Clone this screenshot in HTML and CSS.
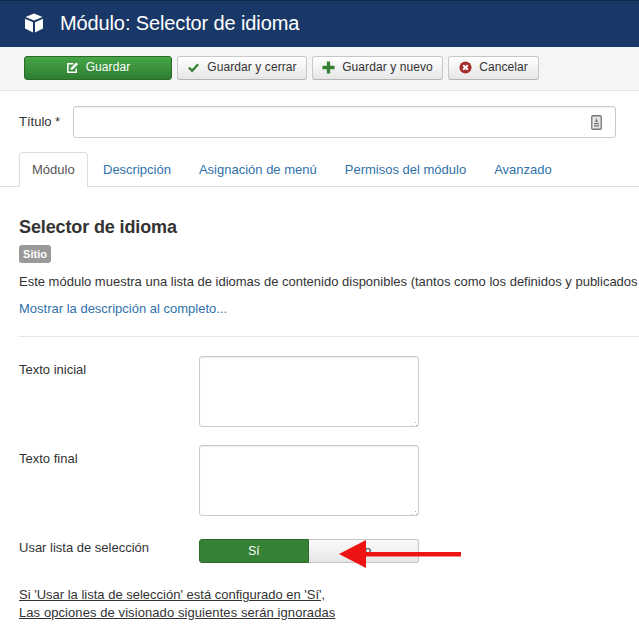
FILE: index.html
```html
<!DOCTYPE html>
<html lang="es">
<head>
<meta charset="utf-8">
<title>Módulo: Selector de idioma</title>
<link rel="stylesheet" href="styles.css">
</head>
<body>
<header class="topbar">
  <svg class="cube" viewBox="0 0 20 20" width="20" height="20"><path fill="#fff" d="M10 .500 18.500 4 10 7.500 1.500 4Z"/><path fill="#fff" d="M1 5.800 9 9.200V19.500L1 15.600Z"/><path fill="#fff" d="M19 5.800 11 9.200V19.500l8-3.900Z"/></svg>
  <h1 class="page-title">Módulo: Selector de idioma</h1>
</header>
<nav class="toolbar">
  <button class="btn btn-save"><svg class="ico" viewBox="0 0 14 14"><path fill="none" stroke="#fff" stroke-width="1.600" d="M11 8v4H2V3h6"/><path fill="#fff" d="M5 7.500 11 1.500 13 3.500 7 9.500H5Z"/></svg>Guardar</button>
  <button class="btn btn-w1"><svg class="ico" viewBox="0 0 14 14"><path fill="none" stroke="#378137" stroke-width="2.600" d="M2 7l3.500 3.500L12 3.500"/></svg>Guardar y cerrar</button>
  <button class="btn btn-w2"><svg class="ico" viewBox="0 0 14 14"><path fill="#378137" d="M5.200 .500h3.600v4.700h4.700v3.600H8.800v4.700H5.200V8.800H.500V5.200h4.700Z"/></svg>Guardar y nuevo</button>
  <button class="btn btn-w3"><svg class="ico" viewBox="0 0 14 14"><circle cx="7" cy="7" r="6.500" fill="#a82b2b"/><path stroke="#fff" stroke-width="2.200" d="M4.500 4.500l5 5M9.500 4.500l-5 5"/></svg>Cancelar</button>
</nav>
<main class="content">
  <div class="title-row">
    <label class="title-label">Título *</label>
    <div class="title-input">
      <svg class="lang-ico" viewBox="0 0 11 15" width="11" height="15"><rect x=".75" y=".75" width="9.500" height="13.500" rx="1" fill="#e4e4e4" stroke="#777" stroke-width="1.300"/><path fill="#777" d="M5.500 3 7 7H4ZM3 8h5v1.200H3ZM3 10.200h5v1.200H3Z"/></svg>
    </div>
  </div>
  <ul class="tabs">
    <li class="tab active">Módulo</li>
    <li class="tab">Descripción</li>
    <li class="tab">Asignación de menú</li>
    <li class="tab">Permisos del módulo</li>
    <li class="tab">Avanzado</li>
  </ul>
  <h2 class="mod-title">Selector de idioma</h2>
  <span class="badge">Sitio</span>
  <p class="desc">Este módulo muestra una lista de idiomas de contenido disponibles (tantos como los definidos y publicados</p>
  <a class="more" href="#">Mostrar la descripción al completo...</a>
  <hr class="rule">
  <div class="field"><label class="field-label">Texto inicial</label><div class="area"><span class="grip"></span></div></div>
  <div class="field"><label class="field-label">Texto final</label><div class="area"><span class="grip"></span></div></div>
  <div class="field field-toggle">
    <label class="field-label">Usar lista de selección</label>
    <div class="toggle"><span class="opt yes">Sí</span><span class="opt no">No</span></div>
  </div>
  <p class="note"><span class="note-first">Si 'Usar la lista de selección' está configurado en 'Sí',</span><br><span class="note-second">Las opciones de visionado siguientes serán ignoradas</span></p>
</main>
<svg class="arrow" viewBox="0 0 123 28" width="123" height="28"><path fill="#ee1414" d="M0 14 27 0V12H122V16.500H27V28Z"/></svg>
</body>
</html>
```
FILE: styles.css
```css
* { box-sizing: border-box; }
html, body { margin: 0; padding: 0; }
body {
  width: 639px;
  height: 634px;
  overflow: hidden;
  position: relative;
  background: #fff;
  font-family: "Liberation Sans", Arial, sans-serif;
  font-size: 13px;
  color: #333;
}
.topbar {
  height: 47px;
  background: #1a3867;
  border-top: 1px solid #10264a;
  display: flex;
  align-items: center;
  padding: 0 0 2px 24px;
}
.cube { margin-right: 16px; }
.page-title {
  margin: 0;
  font-size: 20px;
  font-weight: 400;
  color: #fff;
  letter-spacing: -.12px;
}
.toolbar {
  height: 44px;
  background: #f5f5f5;
  border-bottom: 1px solid #e6e6e6;
  display: flex;
  gap: 5px;
  padding: 9px 0 0 24px;
}
.btn {
  height: 24px;
  padding: 0 0 2px;
  display: flex;
  align-items: center;
  justify-content: center;
  font: 12px "Liberation Sans", Arial, sans-serif;
  color: #333;
  background: linear-gradient(#fff, #e6e6e6);
  border: 1px solid #c8c8c8;
  border-bottom-color: #b5b5b5;
  border-radius: 3px;
  letter-spacing: .08px;
}
.ico { width: 13px; height: 13px; margin-right: 7px; }
.btn-save {
  width: 148px;
  color: #fff;
  background: linear-gradient(#46a546, #2f7d32);
  border-color: #2a6b2a;
}
.btn-w1 { width: 130px; }
.btn-w2 { width: 131px; }
.btn-w3 { width: 91px; }
.content { padding: 15px 0 0 19px; }
.title-row { display: flex; align-items: center; height: 32px; }
.title-label { width: 54px; font-size: 13px; padding-bottom: 2px; }
.title-input {
  width: 543px;
  height: 32px;
  border: 1px solid #ccc;
  border-radius: 3px;
  box-shadow: inset 0 1px 1px rgba(0,0,0,.06);
  display: flex;
  align-items: center;
  justify-content: flex-end;
  padding-right: 13px;
}
.tabs {
  list-style: none;
  margin: 14px 0 0 -19px;
  padding: 0 0 0 19px;
  height: 35px;
  display: flex;
  border-bottom: 1px solid #ddd;
}
.tab {
  padding: 9px 13px 0;
  height: 35px;
  color: #3071a9;
  font-size: 13px;
  border: 1px solid transparent;
  border-bottom: 0;
}
.tab.active {
  color: #555;
  background: #fff;
  width: 69px;
  margin-right: 1px;
  padding: 9px 12px 0;
  border-color: #ddd;
  border-radius: 4px 4px 0 0;
}
.mod-title {
  margin: 30px 0 0;
  font-size: 18px;
  line-height: 21px;
  font-weight: 700;
  color: #333;
  letter-spacing: -.12px;
}
.badge {
  display: block;
  width: 32px;
  height: 18px;
  margin-top: 7px;
  background: #999;
  color: #fff;
  border-radius: 3px;
  font-size: 11px;
  font-weight: 700;
  line-height: 18px;
  text-align: center;
}
.desc {
  margin: 10px 0 0;
  line-height: 18px;
  white-space: nowrap;
}
.more {
  display: block;
  margin-top: 9px;
  line-height: 18px;
  color: #3071a9;
  text-decoration: none;
}
.rule { margin: 18px 0 0; border: 0; border-top: 1px solid #e5e5e5; }
.field { display: flex; margin-top: 18px; }
.rule + .field { margin-top: 19px; }
.field-label { width: 180px; padding-top: 5px; line-height: 18px; }
.area {
  width: 220px;
  height: 71px;
  position: relative;
  border: 1px solid #ccc;
  border-radius: 3px;
  box-shadow: inset 0 1px 1px rgba(0,0,0,.08);
}
.grip {
  position: absolute;
  right: 1px;
  bottom: 0;
  width: 1px;
  height: 1px;
  background: #aaa;
  box-shadow: -4px 0 #bbb, -1px -3px #aaa;
}
.field-toggle { margin-top: 23px; }
.field-toggle .field-label { padding-top: 0; }
.toggle {
  width: 220px;
  height: 24px;
  display: flex;
  font-size: 12px;
  line-height: 22px;
  text-align: center;
}
.opt { flex: 0 0 110px; }
.yes {
  background: #378137;
  color: #fff;
  border: 1px solid #2a6b2a;
  border-radius: 3px 0 0 3px;
}
.no {
  background: linear-gradient(#fbfbfb, #e6e6e6);
  color: #333;
  border: 1px solid #c4c4c4;
  border-left: 0;
  border-radius: 0 3px 3px 0;
}
.note {
  margin: 23px 0 0;
  line-height: 18px;
  text-decoration: underline;
}
.note-second { letter-spacing: .08px; }
.arrow { position: absolute; left: 339px; top: 540px; }
```
